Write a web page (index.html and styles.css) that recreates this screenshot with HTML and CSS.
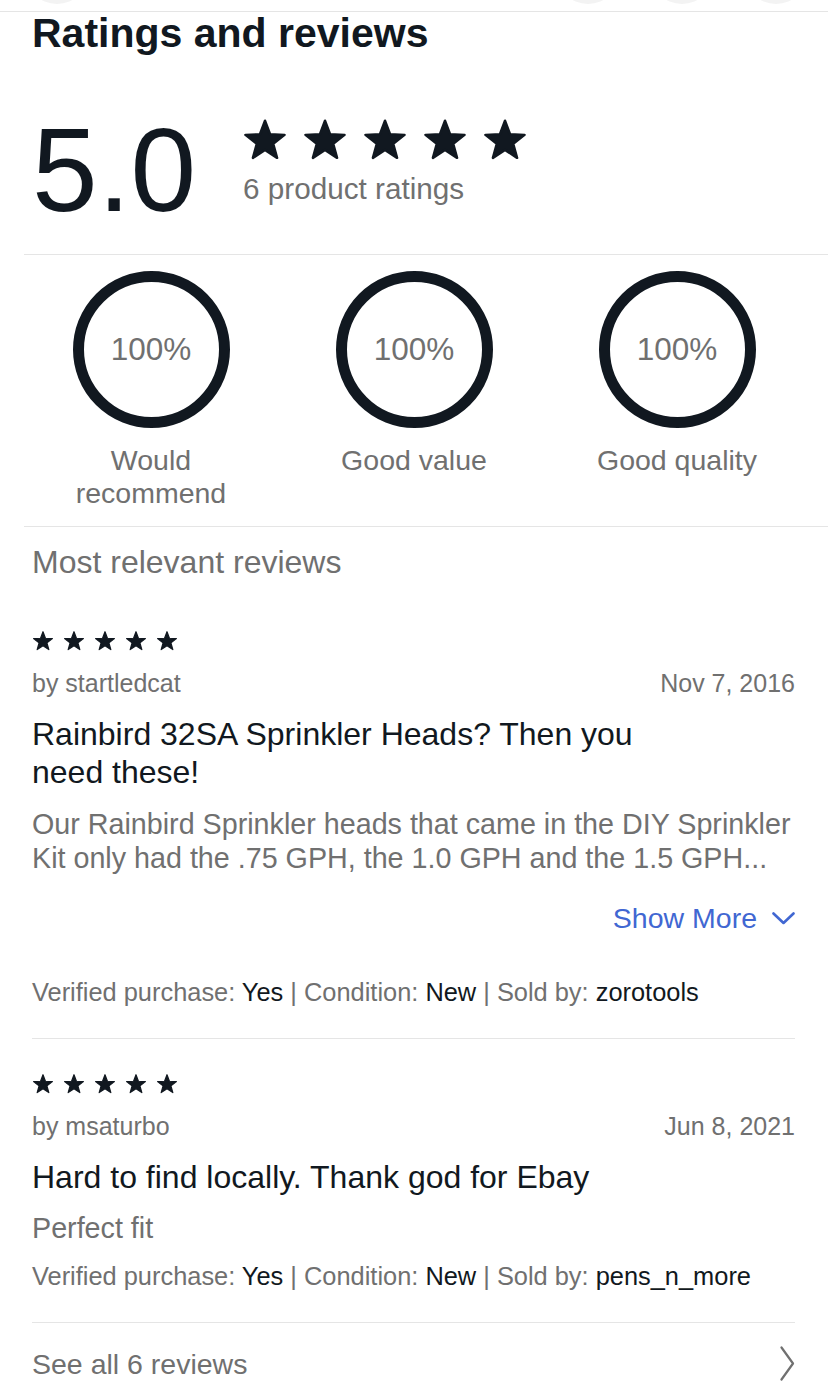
FILE: index.html
```
<!DOCTYPE html>
<html lang="en">
<head>
  <meta charset="UTF-8">
  <title>Ratings and reviews</title>
  <link rel="stylesheet" href="styles.css">
</head>
<body>
  <svg class="defs" width="0" height="0" aria-hidden="true">
    <defs>
      <symbol id="star" viewBox="-0.7 -0.7 21.4 20.2">
        <path d="M10 0 L12.47 6.6 L19.51 6.91 L14 11.3 L15.88 18.09 L10 14.2 L4.12 18.09 L6 11.3 L0.49 6.91 L7.53 6.6 Z" fill="currentColor" stroke="currentColor" stroke-width="1.2" stroke-linejoin="round"/>
      </symbol>
    </defs>
  </svg>

  <div class="topbar">
    <span class="top-btn"></span>
    <div class="top-actions">
      <span class="top-btn"></span>
      <span class="top-btn"></span>
      <span class="top-btn"></span>
    </div>
  </div>

  <section class="summary">
    <h2 class="title">Ratings and reviews</h2>
    <div class="overall">
      <div class="score">5.0</div>
      <div class="overall-side">
        <div class="stars stars-lg">
          <svg><use href="#star"/></svg>
          <svg><use href="#star"/></svg>
          <svg><use href="#star"/></svg>
          <svg><use href="#star"/></svg>
          <svg><use href="#star"/></svg>
        </div>
        <div class="count">6 product ratings</div>
      </div>
    </div>
  </section>

  <section class="aspects">
    <div class="aspect">
      <div class="ring">100%</div>
      <div class="aspect-label">Would recommend</div>
    </div>
    <div class="aspect">
      <div class="ring">100%</div>
      <div class="aspect-label">Good value</div>
    </div>
    <div class="aspect">
      <div class="ring">100%</div>
      <div class="aspect-label">Good quality</div>
    </div>
  </section>

  <section class="reviews">
    <h3 class="reviews-head">Most relevant reviews</h3>

    <article class="review">
      <div class="stars stars-sm">
        <svg><use href="#star"/></svg>
        <svg><use href="#star"/></svg>
        <svg><use href="#star"/></svg>
        <svg><use href="#star"/></svg>
        <svg><use href="#star"/></svg>
      </div>
      <div class="review-meta">
        <span>by startledcat</span>
        <span>Nov 7, 2016</span>
      </div>
      <div class="review-title">Rainbird 32SA Sprinkler Heads? Then you need these!</div>
      <p class="review-body">Our Rainbird Sprinkler heads that came in the DIY Sprinkler Kit only had the .75 GPH, the 1.0 GPH and the 1.5 GPH...</p>
      <div class="show-more">
        <span>Show More</span>
        <svg width="23" height="13" viewBox="0 0 23 13"><path d="M1.5 1.5 L11.5 11 L21.5 1.5" fill="none" stroke="currentColor" stroke-width="2.6" stroke-linecap="round" stroke-linejoin="round"/></svg>
      </div>
      <div class="review-info">Verified purchase: <b>Yes</b> | Condition: <b>New</b> | Sold by: <b>zorotools</b></div>
    </article>

    <article class="review">
      <div class="stars stars-sm">
        <svg><use href="#star"/></svg>
        <svg><use href="#star"/></svg>
        <svg><use href="#star"/></svg>
        <svg><use href="#star"/></svg>
        <svg><use href="#star"/></svg>
      </div>
      <div class="review-meta">
        <span>by msaturbo</span>
        <span>Jun 8, 2021</span>
      </div>
      <div class="review-title">Hard to find locally. Thank god for Ebay</div>
      <p class="review-body body-short">Perfect fit</p>
      <div class="review-info">Verified purchase: <b>Yes</b> | Condition: <b>New</b> | Sold by: <b>pens_n_more</b></div>
    </article>

    <div class="see-all">
      <span>See all 6 reviews</span>
      <svg width="15" height="35" viewBox="0 0 15 35"><path d="M1.5 1.5 L13 17.5 L1.5 33.5" fill="none" stroke="currentColor" stroke-width="2.2" stroke-linecap="round" stroke-linejoin="round"/></svg>
    </div>
  </section>
</body>
</html>
```

FILE: styles.css
```
body {
  margin: 0;
  font-family: "Liberation Sans", Arial, sans-serif;
  color: #111820;
  background: #fff;
}
.defs {
  position: absolute;
}
.topbar {
  height: 11px;
  border-bottom: 1px solid #e5e5e5;
  display: flex;
  padding: 0 20px 0 25px;
  overflow: hidden;
}
.top-btn {
  display: block;
  width: 64px;
  height: 64px;
  margin-top: -60px;
  border-radius: 50%;
  background: #f3f3f3;
}
.top-actions {
  display: flex;
  gap: 30px;
  margin-left: auto;
}
.summary {
  padding: 0 32px 26px;
}
.title {
  margin: 1px 0 0;
  font-size: 41px;
  line-height: 40px;
  font-weight: bold;
}
.overall {
  display: flex;
  align-items: flex-start;
  gap: 47px;
  margin-top: 59px;
}
.score {
  font-size: 118px;
  line-height: 116px;
}
.overall-side {
  margin-top: 7px;
}
.stars {
  display: flex;
  color: #111820;
}
.stars-lg {
  gap: 16px;
}
.stars-lg svg {
  width: 44px;
  height: 42px;
}
.stars-sm {
  gap: 9px;
}
.stars-sm svg {
  width: 22px;
  height: 20px;
}
.count {
  margin-top: 10px;
  font-size: 29.7px;
  line-height: 36px;
  color: #707070;
}
.aspects {
  margin-left: 24px;
  border-top: 1px solid #e5e5e5;
  border-bottom: 1px solid #e5e5e5;
  padding: 16px 0;
  display: grid;
  grid-template-columns: repeat(3, 254px);
  column-gap: 9px;
}
.aspect {
  display: flex;
  flex-direction: column;
  align-items: center;
}
.ring {
  width: 157px;
  height: 157px;
  box-sizing: border-box;
  border: 11px solid #111820;
  border-radius: 50%;
  display: flex;
  align-items: center;
  justify-content: center;
  font-size: 31.5px;
  color: #707070;
}
.aspect-label {
  margin-top: 16px;
  max-width: 200px;
  font-size: 28.5px;
  line-height: 33px;
  text-align: center;
  color: #707070;
}
.reviews {
  padding: 0 33px 0 32px;
}
.reviews-head {
  margin: 15px 0 14px;
  font-size: 32px;
  line-height: 40px;
  font-weight: normal;
  color: #707070;
}
.review {
  padding: 35px 0 30px;
  border-bottom: 1px solid #e5e5e5;
}
.review-meta {
  display: flex;
  justify-content: space-between;
  margin-top: 16px;
  font-size: 25px;
  line-height: 32px;
  color: #707070;
}
.review-title {
  margin-top: 16px;
  max-width: 640px;
  font-size: 32px;
  line-height: 38px;
}
.review-body {
  margin: 16px 0 0;
  font-size: 28.7px;
  line-height: 34px;
  color: #707070;
}
.body-short {
  margin-top: 15px;
}
.show-more {
  display: flex;
  justify-content: flex-end;
  align-items: center;
  gap: 15px;
  margin-top: 26px;
  font-size: 28.5px;
  line-height: 34px;
  color: #4167d2;
}
.review-info {
  margin-top: 15px;
  font-size: 25.4px;
  line-height: 32px;
  color: #707070;
}
.show-more + .review-info {
  margin-top: 41px;
}
.review-info b {
  font-weight: normal;
  color: #111820;
}
.see-all {
  display: flex;
  justify-content: space-between;
  align-items: center;
  margin-top: 23px;
  font-size: 28.5px;
  line-height: 34px;
  color: #707070;
}
```
